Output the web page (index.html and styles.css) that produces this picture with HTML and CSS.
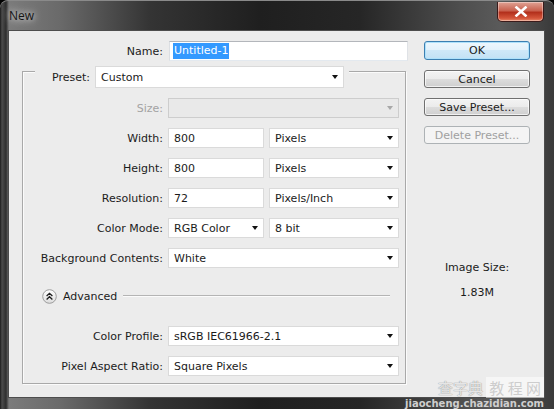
FILE: index.html
```html
<!DOCTYPE html>
<html>
<head>
<meta charset="utf-8">
<title>New</title>
<link rel="stylesheet" href="styles.css">
</head>
<body>
<div class="window">
  <div class="titlebar">
    <span class="title">New</span>
    <div class="close">
      <svg width="14" height="11" viewBox="0 0 14 11"><path d="M2.5 1.5 L11.5 9.5 M11.5 1.5 L2.5 9.5" stroke="#fff" stroke-width="2.6" stroke-linecap="square"/></svg>
    </div>
  </div>
  <div class="client">
    <div class="main">
      <div class="name-row">
        <span class="lbl name-lbl">Name:</span>
        <div class="textbox name-box"><span class="sel">Untitled-1</span></div>
      </div>
      <div class="group">
        <div class="legend">
          <span>Preset:</span>
          <div class="select preset">Custom<i class="arrow"></i></div>
        </div>
        <div class="row first">
          <span class="lbl dim">Size:</span>
          <div class="select full disabled"><i class="arrow"></i></div>
        </div>
        <div class="row">
          <span class="lbl">Width:</span>
          <div class="textbox short">800</div>
          <div class="select unit">Pixels<i class="arrow"></i></div>
        </div>
        <div class="row">
          <span class="lbl">Height:</span>
          <div class="textbox short">800</div>
          <div class="select unit">Pixels<i class="arrow"></i></div>
        </div>
        <div class="row">
          <span class="lbl">Resolution:</span>
          <div class="textbox short">72</div>
          <div class="select unit">Pixels/Inch<i class="arrow"></i></div>
        </div>
        <div class="row">
          <span class="lbl">Color Mode:</span>
          <div class="select short">RGB Color<i class="arrow"></i></div>
          <div class="select unit">8 bit<i class="arrow"></i></div>
        </div>
        <div class="row">
          <span class="lbl">Background Contents:</span>
          <div class="select full">White<i class="arrow"></i></div>
        </div>
        <div class="advanced">
          <svg class="adv-icon" width="15" height="15" viewBox="0 0 15 15">
            <defs>
              <linearGradient id="g" x1="0" y1="0" x2="0" y2="1">
                <stop offset="0" stop-color="#ffffff"/>
                <stop offset="1" stop-color="#dcdcdc"/>
              </linearGradient>
            </defs>
            <circle cx="7.5" cy="7.5" r="6.8" fill="url(#g)" stroke="#9c9c9c" stroke-width="1"/>
            <path d="M4.6 7 L7.5 4.3 L10.4 7 M4.6 10.4 L7.5 7.7 L10.4 10.4" fill="none" stroke="#1e1e1e" stroke-width="1.3"/>
          </svg>
          <span>Advanced</span>
          <div class="sep"></div>
        </div>
        <div class="row adv-first">
          <span class="lbl">Color Profile:</span>
          <div class="select full">sRGB IEC61966-2.1<i class="arrow"></i></div>
        </div>
        <div class="row">
          <span class="lbl">Pixel Aspect Ratio:</span>
          <div class="select full">Square Pixels<i class="arrow"></i></div>
        </div>
      </div>
    </div>
    <div class="side">
      <div class="btn default">OK</div>
      <div class="btn">Cancel</div>
      <div class="btn">Save Preset...</div>
      <div class="btn off">Delete Preset...</div>
      <div class="size-label">Image Size:</div>
      <div class="size-value">1.83M</div>
    </div>
  </div>
  <div class="wm-cn">查字典 <span class="wm-box">教 程 网</span></div>
  <div class="wm-url">jiaocheng.chazidian.com</div>
</div>
</body>
</html>
```

FILE: styles.css
```css
* { box-sizing: border-box; }
html, body { margin: 0; padding: 0; }
body {
  background: #000;
  width: 554px;
  height: 409px;
  overflow: hidden;
  font-family: "DejaVu Sans", Verdana, sans-serif;
  font-size: 11px;
  color: #1b1b1b;
}
.window {
  position: relative;
  width: 554px;
  height: 409px;
  display: flex;
  flex-direction: column;
  padding: 0 9px 12px 8px;
  border-radius: 8px 8px 0 0;
  border-top: 1px solid #8a8a8a;
  background:
    linear-gradient(to right, #1a1a1a 0, #4c4c4c 2px, #2e2e2e 6px, rgba(0,0,0,0) 9px),
    linear-gradient(to right, #7e7e7e 0, #6a6a6a 60px, #343434 150px, #1f1f1f 260px, #262626 360px, #4e4e4e 460px, #5a5a5a 500px, #3a3a3a 554px);
}
.titlebar {
  height: 29px;
  display: flex;
  align-items: flex-start;
  flex: none;
}
.title {
  margin-left: 1px;
  padding-top: 6px;
  font-family: "Open Sans", "DejaVu Sans", sans-serif;
  font-size: 12px;
  color: #151515;
  text-shadow: 0 0 6px rgba(255,255,255,0.75), 0 0 10px rgba(255,255,255,0.5);
}
.close {
  margin-left: auto;
  margin-right: 1px;
  margin-top: 1px;
  width: 47px;
  height: 20px;
  border: 1px solid #3a1a1a;
  border-top: none;
  border-radius: 0 0 5px 5px;
  background: linear-gradient(#e0a395 0, #c9624f 45%, #b3301c 55%, #d4553a 85%, #e88a6a 100%);
  box-shadow: inset 0 0 0 1px rgba(255,255,255,0.35);
  display: flex;
  align-items: center;
  justify-content: center;
}
.client {
  width: 537px;
  height: 368px;
  border: 1px solid #4d4d4d;
  background: #ececec;
  padding-top: 10px;
  display: flex;
  gap: 16px;
  flex: none;
}
.main {
  width: 399px;
  display: flex;
  flex-direction: column;
}
.name-row {
  display: flex;
  align-items: center;
  gap: 6px;
  height: 20px;
}
.lbl {
  width: 140px;
  text-align: right;
  flex: none;
  white-space: nowrap;
}
.name-lbl { width: 154px; }
.dim { color: #a3a3a3; }
.textbox, .select {
  height: 20px;
  background: #fff;
  border: 1px solid #dadada;
  display: flex;
  align-items: center;
  padding-left: 5px;
  white-space: nowrap;
  flex: none;
}
.name-box {
  width: 239px;
  border-color: #b3b6bb #dfe2e6 #e3e9ef #dcdfe3;
  padding-left: 3px;
}
.sel {
  background: #3399ff;
  color: #fff;
  padding: 1px 1px;
  line-height: 14px;
}
.group {
  margin-top: 10px;
  margin-left: 13px;
  width: 384px;
  height: 313px;
  border: 1px solid #a9a9a9;
  box-shadow: inset 1px 1px 0 #fbfbfb, 1px 1px 0 #fbfbfb;
  padding-right: 6px;
  display: flex;
  flex-direction: column;
}
.legend {
  align-self: flex-start;
  margin: -6px 0 0 12px;
  height: 22px;
  background: #ececec;
  padding: 0 5px 0 17px;
  display: flex;
  align-items: center;
  gap: 5px;
}
.preset { width: 249px; height: 22px; }
.row {
  display: flex;
  align-items: center;
  gap: 5px;
  height: 20px;
  margin-top: 10px;
}
.full { width: 231px; }
.short { width: 96px; }
.unit { width: 130px; }
.disabled {
  background: #e9e9e9;
  border-color: #cdcdcd;
}
.disabled .arrow { border-top-color: #a8a8a8; }
.arrow {
  width: 0;
  height: 0;
  margin-left: auto;
  margin-right: 5px;
  border-left: 3.5px solid transparent;
  border-right: 3.5px solid transparent;
  border-top: 4px solid #111;
}
.advanced {
  display: flex;
  align-items: center;
  height: 20px;
  margin-top: 18px;
  padding-left: 19px;
}
.adv-icon { flex: none; margin-right: 6px; }
.sep {
  flex: 1;
  height: 2px;
  margin-left: 6px;
  margin-right: 9px;
  border-top: 1px solid #b4b4b4;
  border-bottom: 1px solid #fbfbfb;
}
.adv-first { margin-top: 20px; }
.side {
  width: 106px;
  display: flex;
  flex-direction: column;
  align-items: stretch;
}
.btn {
  height: 18px;
  margin-top: 10px;
  border: 1px solid #707070;
  border-radius: 3px;
  background: linear-gradient(#f3f3f3 0, #ebebeb 50%, #dddddd 50%, #cfcfcf 100%);
  box-shadow: inset 0 0 0 1px rgba(255,255,255,0.7);
  display: flex;
  align-items: center;
  justify-content: center;
  white-space: nowrap;
}
.btn.default {
  margin-top: 0;
  height: 19px;
  border-color: #3c7fb1;
  background: linear-gradient(#eef7fd 0, #e2f1fb 50%, #cfe8f8 50%, #c2e1f5 100%);
  box-shadow: inset 0 0 0 1px #aee1fb;
}
.btn.off {
  color: #a0a0a0;
  border-color: #adb2b5;
  background: #f4f4f4;
  box-shadow: none;
}
.size-label {
  margin-top: 117px;
  text-align: center;
  line-height: 13px;
}
.size-value {
  margin-top: 12px;
  text-align: center;
  line-height: 13px;
}
.wm-cn {
  position: absolute;
  right: 10px;
  bottom: 13px;
  font-family: "Noto Sans CJK SC", sans-serif;
  font-size: 15px;
  line-height: 16px;
  color: rgba(255,255,255,0.75);
  text-shadow: 0 0 1px #999, 0 0 1px #999;
  letter-spacing: 0;
}
.wm-box {
  background: rgba(255,255,255,0.55);
  padding: 0 3px;
  color: rgba(200,200,200,0.9);
  text-shadow: none;
}
.wm-url {
  position: absolute;
  right: 10px;
  bottom: 0;
  font-family: "DejaVu Sans", sans-serif;
  font-weight: bold;
  font-size: 10px;
  line-height: 11px;
  color: #cfcfcf;
}
```
